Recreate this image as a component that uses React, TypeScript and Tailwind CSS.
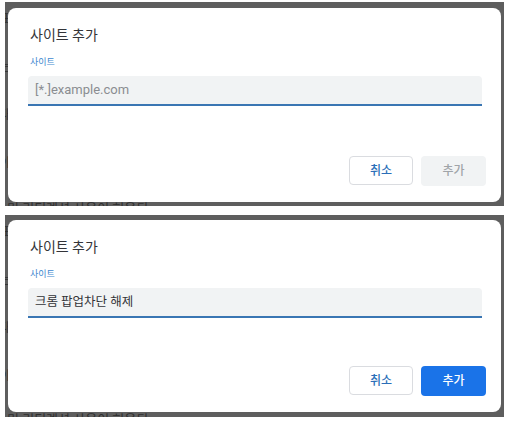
import React from "react";

const font = "font-['Roboto','Noto_Sans_CJK_KR',sans-serif]";

function Backdrop() {
  // page content dimmed behind the dialog overlay
  return (
    <>
      <div className="absolute left-[-6px] top-[10px] flex flex-col gap-[34px] text-[12px] leading-[14px] text-[#2e2e2e]">
        <span>표</span>
        <span>는</span>
        <span>다</span>
        <span>이</span>
      </div>
      <div className="absolute left-[2px] bottom-[-10px] text-[13px] leading-[14px] text-[#2e2e2e] whitespace-nowrap">
        미 리디렉션 사용이 허용된
      </div>
    </>
  );
}

function Dialog({ value, enabled, height }: { value?: string; enabled: boolean; height: string }) {
  return (
    <div className={`relative ${height} bg-white rounded-[8px] flex flex-col pt-[17px] pb-[16px] pl-[20px] pr-[19px]`}>
      <h2 className="pl-[2px] text-[14px] leading-[20px] text-[#333438] font-normal">사이트 추가</h2>
      <label className="mt-[11px] pl-[2px] text-[9px] leading-[12px] text-[#4188cf]">사이트</label>
      <div className="mt-[8px] h-[30px] bg-[#f1f3f4] rounded-t-[4px] border-b-2 border-[#3a76b3] flex items-center px-[7px]">
        {value ? (
          <span className="text-[12.5px] text-[#333438]">{value}</span>
        ) : (
          <span className="text-[13px] text-[#8a8d91]">[*.]example.com</span>
        )}
      </div>
      <div className="mt-auto flex justify-end gap-[8px] -mr-[4px]">
        <button className="w-[64px] h-[29px] rounded-[4px] border border-[#dadce0] bg-white text-[12px] text-[#2b6fb8] font-medium">
          취소
        </button>
        {enabled ? (
          <button className="w-[65px] h-[30px] rounded-[4px] bg-[#1a73e8] text-[12px] text-white font-medium">
            추가
          </button>
        ) : (
          <button className="w-[65px] h-[30px] rounded-[4px] bg-[#f1f3f4] text-[12px] text-[#a0a4a8] font-medium">
            추가
          </button>
        )}
      </div>
    </div>
  );
}

export default function App() {
  return (
    <div className={`w-[510px] h-[422px] bg-white pt-[2px] pl-[5px] flex flex-col gap-[9px] ${font}`}>
      <div className="relative w-[499px] h-[204px] bg-[#5e5e5e] overflow-hidden pt-[6px] px-[3px]">
        <Backdrop />
        <Dialog enabled={false} height="h-[194px]" />
      </div>
      <div className="relative w-[499px] h-[202px] bg-[#5e5e5e] overflow-hidden pt-[5px] px-[3px]">
        <Backdrop />
        <Dialog value="크롬 팝업차단 해제" enabled={true} height="h-[192px]" />
      </div>
    </div>
  );
}
